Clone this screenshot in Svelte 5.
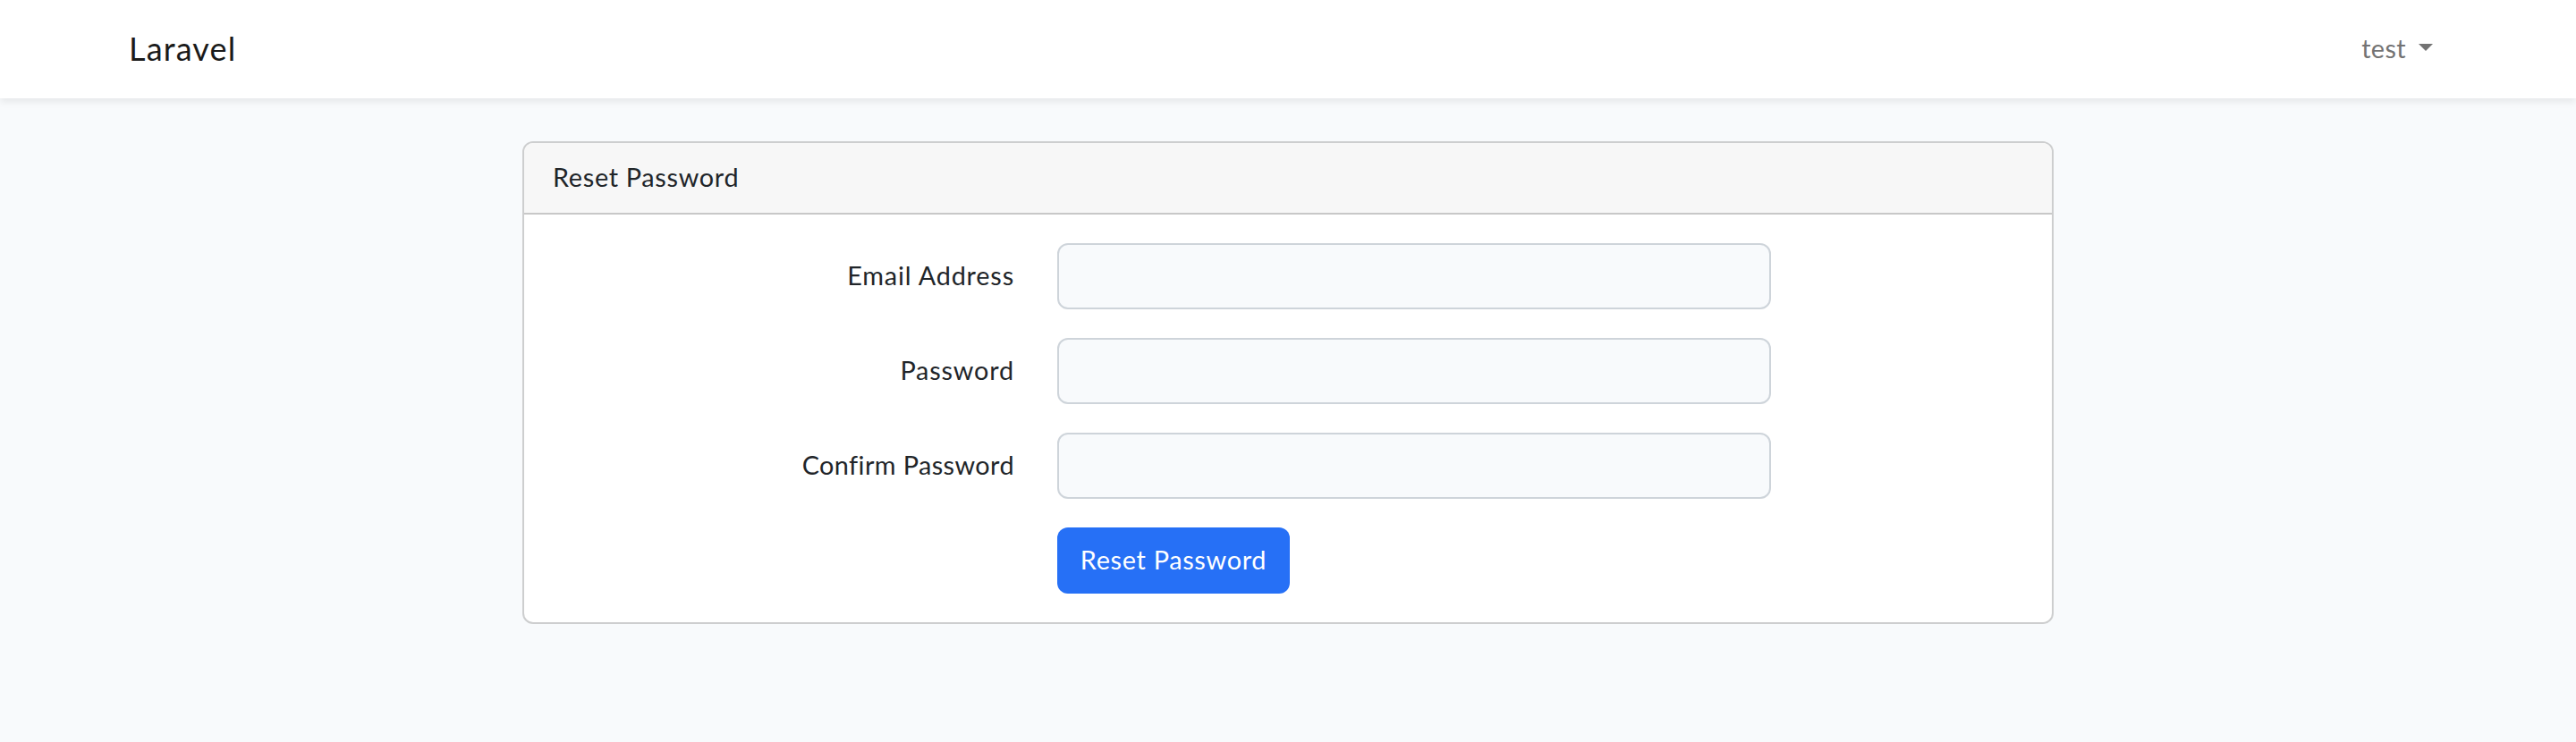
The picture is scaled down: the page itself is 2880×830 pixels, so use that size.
<script>
  const fields = [
    { id: 'email', type: 'email', label: 'Email Address', spacing: 0.84 },
    { id: 'password', type: 'password', label: 'Password', spacing: 0.84 },
    { id: 'password-confirm', type: 'password', label: 'Confirm Password', spacing: 0.42 }
  ];
</script>

<div class="page">
  <nav class="navbar">
    <a class="brand" href="#home">Laravel</a>
    <button class="user" type="button">
      <span class="name">test</span>
      <svg class="caret" width="16" height="8" viewBox="0 0 16 8" aria-hidden="true">
        <path d="M0 0H16L8 8Z" fill="currentColor" />
      </svg>
    </button>
  </nav>

  <main>
    <section class="card">
      <header>Reset Password</header>
      <form>
        {#each fields as field (field.id)}
          <div class="row">
            <label for={field.id}><span style="letter-spacing: {field.spacing}px">{field.label}</span></label>
            <input id={field.id} type={field.type} />
          </div>
        {/each}
        <div class="row">
          <button class="submit" type="button">Reset Password</button>
        </div>
      </form>
    </section>
  </main>
</div>

<style>
  :global(body) {
    margin: 0;
    background: #f8fafc;
  }
  .page, .page * {
    box-sizing: border-box;
  }
  .page {
    min-height: 830px;
    background: #f8fafc;
    color: #212529;
    font-family: Lato, "Open Sans", sans-serif;
    font-size: 28.8px;
    line-height: 46px;
  }
  .navbar {
    position: relative;
    display: flex;
    align-items: center;
    justify-content: space-between;
    height: 110px;
    padding: 0 160px 0 144px;
    background: #fff;
    box-shadow: 0 4px 8px rgba(0, 0, 0, 0.075);
  }
  .brand {
    padding-bottom: 3px;
    color: #1a1a1a;
    font-size: 36px;
    letter-spacing: 1.15px;
    text-decoration: none;
  }
  .user {
    display: flex;
    align-items: center;
    gap: 14px;
    padding: 0 0 2px;
    border: 0;
    background: none;
    color: #737373;
    font: inherit;
  }
  .name {
    letter-spacing: 0.4px;
  }
  .caret {
    display: block;
    margin-bottom: 2px;
  }
  main {
    padding-top: 48px;
  }
  .card {
    width: 1712px;
    margin: 0 auto;
    border: 2px solid #cdcecf;
    border-radius: 12px;
    background: #fff;
    overflow: hidden;
  }
  header {
    height: 80px;
    padding: 15px 32px 17px;
    border-bottom: 2px solid #c8c8c8;
    background: #f7f7f7;
    letter-spacing: 0.7px;
  }
  form {
    display: grid;
    gap: 32px;
    padding: 32px;
  }
  .row {
    display: grid;
    grid-template-columns: 516px 798px;
    column-gap: 48px;
    height: 74px;
  }
  label {
    padding: 13px 0 15px;
    text-align: right;
  }
  input {
    width: 100%;
    height: 74px;
    padding: 12px 24px;
    border: 2px solid #ced4da;
    border-radius: 12px;
    outline: none;
    background: #f8fafc;
    color: inherit;
    font: inherit;
  }
  .submit {
    grid-column: 2;
    justify-self: start;
    width: 260px;
    height: 74px;
    padding: 0 0 2px;
    border: 0;
    border-radius: 12px;
    background: #2670f6;
    color: #fff;
    font: inherit;
    letter-spacing: 0.7px;
    white-space: nowrap;
  }
</style>
